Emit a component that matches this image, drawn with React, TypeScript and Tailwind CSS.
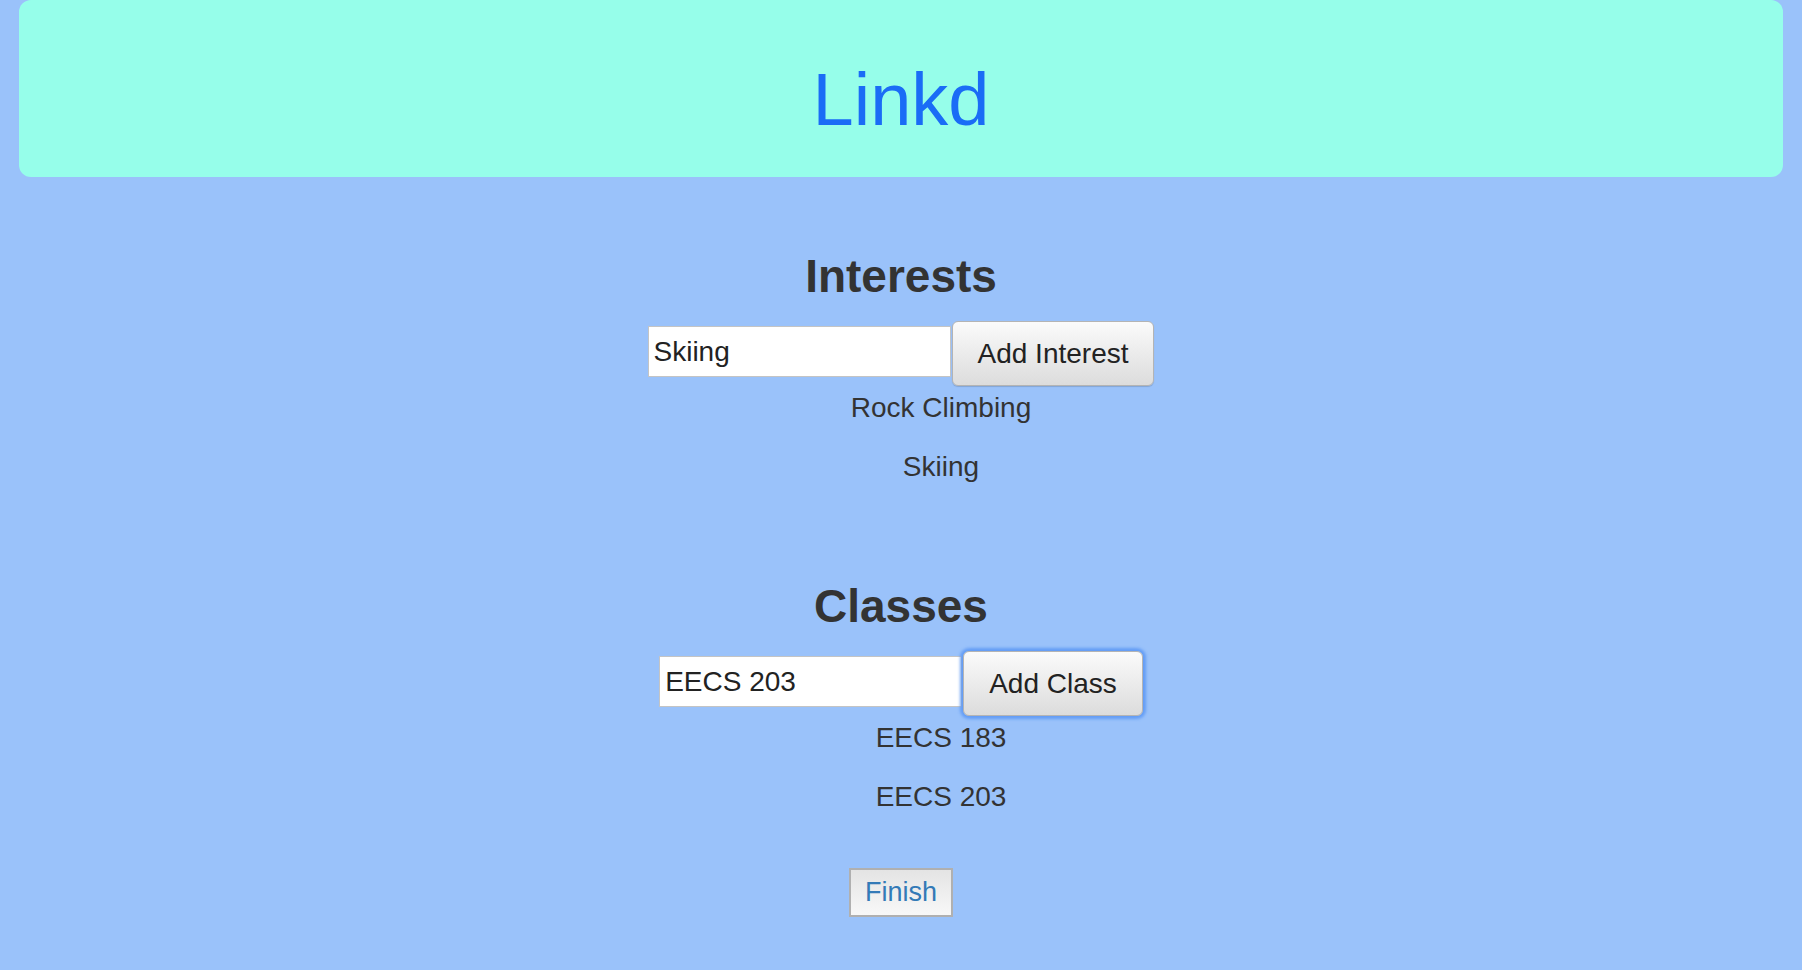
import React from "react";

function AddRow({ value, label, focused }: { value: string; label: string; focused?: boolean }) {
  return (
    <div className="flex justify-center items-start gap-[1px]">
      <input
        readOnly
        value={value}
        className="mt-[5px] w-[303px] h-[51px] bg-white border border-[#c4c4c4] px-[5px] text-[28px] text-[#222] outline-none"
      />
      <button
        className={
          "h-[65px] px-[25px] rounded-[6px] border border-[#b4b4b4] bg-gradient-to-b from-[#fbfbfb] to-[#dcdcdc] text-[28px] text-[#222] " +
          (focused ? "shadow-[0_0_3px_3px_rgba(90,150,245,0.85)]" : "shadow-[0_1px_1px_rgba(0,0,0,0.15)]")
        }
      >
        {label}
      </button>
    </div>
  );
}

function ItemList({ items }: { items: string[] }) {
  return (
    <ul className="flex flex-col gap-[15px] pl-[80px] text-center">
      {items.map((item) => (
        <li key={item} className="text-[28px] leading-[44px] text-[#333]">
          {item}
        </li>
      ))}
    </ul>
  );
}

export default function App() {
  return (
    <div
      className="min-h-[970px] bg-[#9ac2fa] px-[19px]"
      style={{ fontFamily: '"Liberation Sans", Arial, sans-serif' }}
    >
      <header className="h-[177px] rounded-[12px] bg-[#96feea] pt-[60px] text-center">
        <h1 className="text-[74px] leading-[80px] text-[#1a6cf6]">Linkd</h1>
      </header>

      <section className="mt-[73px] flex flex-col">
        <h2 className="text-center text-[46px] leading-[52px] font-bold text-[#333] mb-[19px]">Interests</h2>
        <AddRow value="Skiing" label="Add Interest" />
        <ItemList items={["Rock Climbing", "Skiing"]} />
      </section>

      <section className="mt-[91px] flex flex-col">
        <h2 className="text-center text-[46px] leading-[52px] font-bold text-[#333] mb-[19px]">Classes</h2>
        <AddRow value="EECS 203" label="Add Class" focused />
        <ItemList items={["EECS 183", "EECS 203"]} />
      </section>

      <div className="mt-[49px] flex justify-center">
        <button className="w-[104px] h-[49px] border-2 border-[#b0b0b0] bg-gradient-to-b from-[#e4e4e4] to-[#f8f8f8] text-[27px] text-[#337ab7]">
          Finish
        </button>
      </div>
    </div>
  );
}
